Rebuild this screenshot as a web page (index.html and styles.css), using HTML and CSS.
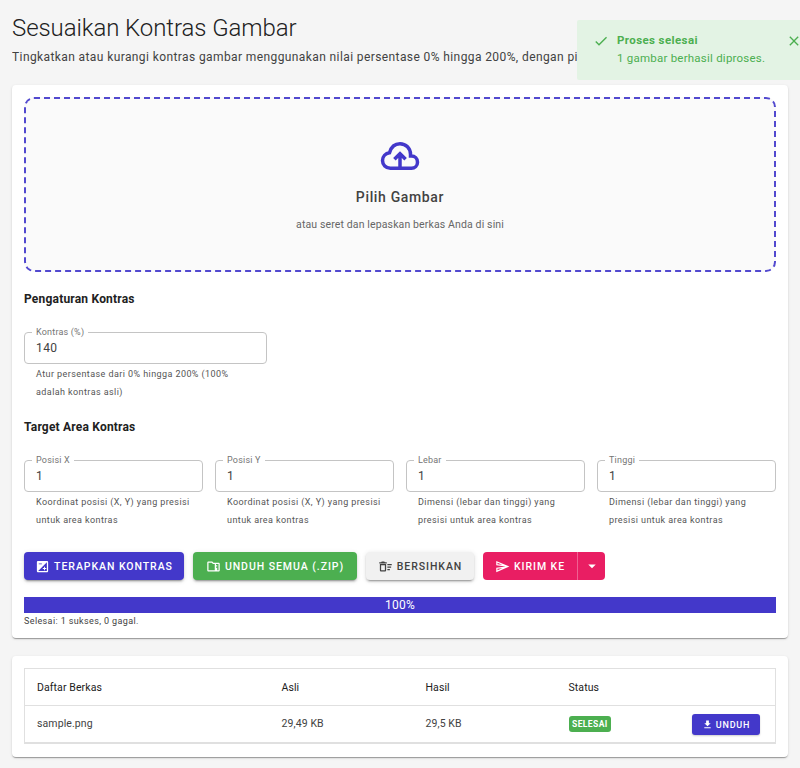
FILE: index.html
```html
<!DOCTYPE html>
<html lang="id">
<head>
<meta charset="utf-8">
<title>Sesuaikan Kontras Gambar</title>
<link rel="stylesheet" href="styles.css">
</head>
<body>
<div class="toast">
  <svg class="toast-check" viewBox="0 0 24 24"><path d="M9 16.170 4.830 12l-1.420 1.410L9 19 21 7l-1.410-1.410z"/></svg>
  <div class="toast-text">
    <div class="toast-title">Proses selesai</div>
    <div class="toast-msg">1 gambar berhasil diproses.</div>
  </div>
  <svg class="toast-close" viewBox="0 0 24 24"><path d="M19 6.410 17.590 5 12 10.590 6.410 5 5 6.410 10.590 12 5 17.590 6.410 19 12 13.410 17.590 19 19 17.590 13.410 12z"/></svg>
</div>
<main class="page">
  <h1 class="title">Sesuaikan Kontras Gambar</h1>
  <p class="subtitle">Tingkatkan atau kurangi kontras gambar menggunakan nilai persentase 0% hingga 200%, dengan piksel yang presisi.</p>

  <section class="card main-card">
    <div class="dropzone">
      <svg class="cloud" viewBox="0 0 24 24"><path d="M12 19H6.500C3.900 19 2 17 2 14.600c0-2.300 1.700-4.200 4-4.500C6.900 7 9.200 5 12 5c3.400 0 6 2.700 6 6v1h.5c2 0 3.500 1.500 3.500 3.500S20.500 19 18.500 19H12V11M8.800 13.900 12 10.700l3.200 3.200"/></svg>
      <div class="drop-title">Pilih Gambar</div>
      <div class="drop-sub">atau seret dan lepaskan berkas Anda di sini</div>
    </div>

    <h2 class="heading heading-first">Pengaturan Kontras</h2>
    <div class="field field-single">
      <div class="box"><span class="label">Kontras (%)</span><span class="value">140</span></div>
      <p class="helper">Atur persentase dari 0% hingga 200% (100% adalah kontras asli)</p>
    </div>

    <h2 class="heading heading-second">Target Area Kontras</h2>
    <div class="field-grid">
      <div class="field">
        <div class="box"><span class="label">Posisi X</span><span class="value">1</span></div>
        <p class="helper">Koordinat posisi (X, Y) yang presisi untuk area kontras</p>
      </div>
      <div class="field">
        <div class="box"><span class="label">Posisi Y</span><span class="value">1</span></div>
        <p class="helper">Koordinat posisi (X, Y) yang presisi untuk area kontras</p>
      </div>
      <div class="field">
        <div class="box"><span class="label">Lebar</span><span class="value">1</span></div>
        <p class="helper">Dimensi (lebar dan tinggi) yang presisi untuk area kontras</p>
      </div>
      <div class="field">
        <div class="box"><span class="label">Tinggi</span><span class="value">1</span></div>
        <p class="helper">Dimensi (lebar dan tinggi) yang presisi untuk area kontras</p>
      </div>
    </div>

    <div class="actions">
      <button class="btn btn-primary">
        <svg class="btn-icon" viewBox="0 0 24 24"><path d="M19 3H5c-1.100 0-2 .9-2 2v14c0 1.100.9 2 2 2h14c1.100 0 2-.9 2-2V5c0-1.100-.9-2-2-2zM6 7h5v1.500H6V7zm13 12H5L19 5v14zm-4.500-3v2H16v-2h2v-1.500h-2v-2h-1.500v2h-2V16h2z"/></svg>
        Terapkan Kontras
      </button>
      <button class="btn btn-green">
        <svg class="btn-icon" viewBox="0 0 24 24"><path fill-rule="evenodd" d="M20 6h-8l-2-2H4c-1.100 0-2 .9-2 2v12c0 1.100.9 2 2 2h16c1.100 0 2-.9 2-2V8c0-1.100-.9-2-2-2zM4 18V6h5.170l2 2H14v10H4zm12 0v-2h2v-2h-2v-2h2v-2h-2V8h4v10h-2v-2h-2v2h-0z"/></svg>
        Unduh Semua (.zip)
      </button>
      <button class="btn btn-grey">
        <svg class="btn-icon" viewBox="0 0 24 24"><path d="M15 16h4v2h-4zm0-8h7v2h-7zm0 4h6v2h-6zM3 18c0 1.100.9 2 2 2h6c1.100 0 2-.9 2-2V8H3v10zm2-8h6v8H5v-8zm5-6H6L5 5H2v2h12V5h-3z"/></svg>
        Bersihkan
      </button>
      <div class="split">
        <button class="btn btn-pink split-main">
          <svg class="btn-icon" viewBox="0 0 24 24"><path d="m4.010 6.030 7.510 3.220-7.520-1 .01-2.220m7.500 8.720L4 17.970v-2.220l7.510-1M2.010 3 2 10l15 2-15 2 .01 7L23 12 2.010 3z"/></svg>
          Kirim ke
        </button>
        <button class="btn btn-pink split-arrow" aria-label="Pilih tujuan">
          <svg class="btn-icon" viewBox="0 0 24 24"><path d="m7 10 5 5 5-5z"/></svg>
        </button>
      </div>
    </div>

    <div class="progress">100%</div>
    <div class="progress-note">Selesai: 1 sukses, 0 gagal.</div>
  </section>

  <section class="card table-card">
    <table class="files">
      <thead>
        <tr><th class="c-name">Daftar Berkas</th><th class="c-orig">Asli</th><th class="c-res">Hasil</th><th class="c-status">Status</th><th class="c-act"></th></tr>
      </thead>
      <tbody>
        <tr>
          <td>sample.png</td><td>29,49 KB</td><td>29,5 KB</td>
          <td><span class="chip">Selesai</span></td>
          <td class="cell-act">
            <button class="btn-small">
              <svg viewBox="0 0 24 24"><path d="M5 20h14v-2H5v2zM19 9h-4V3H9v6H5l7 7 7-7z"/></svg>
              Unduh
            </button>
          </td>
        </tr>
      </tbody>
    </table>
  </section>
</main>
</body>
</html>
```
FILE: styles.css
```css
* { box-sizing: border-box; }
html, body { margin: 0; height: 768px; overflow: hidden; }
body {
  background: #f5f5f5;
  color: #212121;
  font-family: Roboto, "Liberation Sans", sans-serif;
  position: relative;
}
.page { padding: 12px 12px 0; }
.title {
  margin: 0;
  font-size: 24px;
  line-height: 32px;
  font-weight: 300;
  letter-spacing: -.08px;
  color: #212121;
}
.subtitle {
  margin: 5px 0 0;
  width: 565px;
  overflow: hidden;
  font-size: 12px;
  line-height: 16px;
  letter-spacing: .4px;
  white-space: nowrap;
  color: #424242;
}
.card {
  background: #fff;
  border-radius: 4px;
  box-shadow: 0 2px 1px -1px rgba(0,0,0,.2), 0 1px 1px 0 rgba(0,0,0,.14), 0 1px 3px 0 rgba(0,0,0,.12);
}
.main-card { margin-top: 20px; padding: 12px 12px 10px; }
.dropzone {
  height: 175px;
  border: 2px dashed #5249cf;
  border-radius: 10px;
  background: #fafafa;
  display: flex;
  flex-direction: column;
  align-items: center;
}
.cloud {
  width: 42px;
  height: 42px;
  margin-top: 36px;
  fill: none;
  stroke: #4338ca;
  stroke-width: 2;
}
.drop-title { margin-top: 8px; font-size: 14px; line-height: 24px; font-weight: 500; letter-spacing: .65px; color: #424242; }
.drop-sub { margin-top: 6px; font-size: 10.500px; line-height: 20px; letter-spacing: .13px; color: #666; }
.heading { margin: 0; font-size: 12px; line-height: 16px; font-weight: 700; letter-spacing: .2px; color: #212121; }
.heading-first { margin-top: 19px; }
.heading-second { margin-top: 18px; }
.field-single { width: 243px; margin-top: 25px; }
.field-grid { display: grid; grid-template-columns: repeat(4, 1fr); gap: 12px; margin-top: 25px; }
.box {
  position: relative;
  height: 32px;
  border: 1px solid #c4c4c4;
  border-radius: 4px;
  padding: 0 11px;
  display: flex;
  align-items: center;
}
.label {
  position: absolute;
  left: 7px;
  top: -6px;
  padding: 0 4px;
  background: #fff;
  font-size: 9px;
  line-height: 11px;
  letter-spacing: .2px;
  color: #757575;
}
.value { font-size: 12px; letter-spacing: .4px; color: #424242; }
.helper { margin: 1px 0 0; padding: 0 12px; font-size: 9px; line-height: 18px; letter-spacing: .42px; color: #555; }
.actions { display: flex; gap: 9px; margin-top: 23px; }
.btn {
  height: 28px;
  border: 0;
  border-radius: 4px;
  display: inline-flex;
  align-items: center;
  justify-content: center;
  gap: 4px;
  font-family: inherit;
  font-size: 10.500px;
  font-weight: 500;
  letter-spacing: .95px;
  text-transform: uppercase;
  box-shadow: 0 3px 1px -2px rgba(0,0,0,.2), 0 2px 2px 0 rgba(0,0,0,.14), 0 1px 5px 0 rgba(0,0,0,.12);
  padding: 0;
}
.btn-icon { width: 15px; height: 15px; fill: currentColor; }
.btn-primary { width: 160px; background: #4338ca; color: #fff; }
.btn-green { width: 164px; background: #4caf50; color: #fff; }
.btn-grey { width: 108px; background: #f1f1f1; color: #424242; }
.btn-pink { background: #e91e63; color: #fff; }
.split { display: flex; box-shadow: none; }
.split-main { width: 94px; border-radius: 4px 0 0 4px; box-shadow: none; }
.split-arrow { width: 28px; border-radius: 0 4px 4px 0; border-left: 1px solid rgba(255,255,255,.3); box-shadow: none; }
.split-arrow .btn-icon { width: 18px; height: 18px; }
.progress {
  margin-top: 17px;
  height: 16px;
  background: #4338ca;
  color: #fff;
  text-align: center;
  font-size: 12px;
  line-height: 16px;
  letter-spacing: .3px;
}
.progress-note { margin-top: 1px; font-size: 9px; line-height: 14px; letter-spacing: .38px; color: #424242; }
.table-card { margin-top: 18px; padding: 12px 12px 13px; }
.files {
  width: 100%;
  border-collapse: collapse;
  table-layout: fixed;
  border: 1px solid #e0e0e0;
  border-bottom-width: 2px;
}
.files th, .files td {
  padding: 0 12px;
  text-align: left;
  font-size: 10.500px;
  letter-spacing: .1px;
  height: 37px;
  color: #424242;
  font-weight: 400;
}
.files th { color: #212121; border-bottom: 1px solid #e0e0e0; }
.c-name { width: 245px; }
.c-orig { width: 144px; }
.c-res { width: 143px; }
.c-status { width: 135px; }
.files td.cell-act { text-align: right; padding: 0 15px 0 0; }
.chip {
  display: inline-block;
  height: 16px;
  padding: 0 3.500px;
  border-radius: 3px;
  background: #4caf50;
  color: #fff;
  font-size: 8.500px;
  line-height: 16px;
  font-weight: 700;
  letter-spacing: .4px;
  text-transform: uppercase;
  vertical-align: middle;
}
.btn-small {
  height: 21px;
  width: 68px;
  margin-top: 2px;
  border: 0;
  border-radius: 3px;
  background: #4338ca;
  color: #fff;
  display: inline-flex;
  align-items: center;
  justify-content: center;
  gap: 3px;
  font-family: inherit;
  font-size: 9px;
  font-weight: 500;
  letter-spacing: .8px;
  text-transform: uppercase;
  padding: 0;
  vertical-align: middle;
  box-shadow: 0 1px 2px rgba(0,0,0,.2);
}
.btn-small svg { width: 11px; height: 11px; fill: currentColor; }
.toast {
  position: absolute;
  left: 577px;
  top: 20px;
  width: 240px;
  height: 60px;
  background: #e3f3e4;
  border-radius: 2px;
  z-index: 2;
  color: #4caf50;
}
.toast-check { position: absolute; left: 16px; top: 13px; width: 16px; height: 16px; fill: #4caf50; }
.toast-text { position: absolute; left: 40px; top: 12px; white-space: nowrap; }
.toast-title { font-size: 11.500px; line-height: 17px; font-weight: 700; letter-spacing: .4px; }
.toast-msg { font-size: 11.500px; line-height: 18px; letter-spacing: .23px; }
.toast-close { position: absolute; left: 209px; top: 13px; width: 16px; height: 16px; fill: #4caf50; }
```
